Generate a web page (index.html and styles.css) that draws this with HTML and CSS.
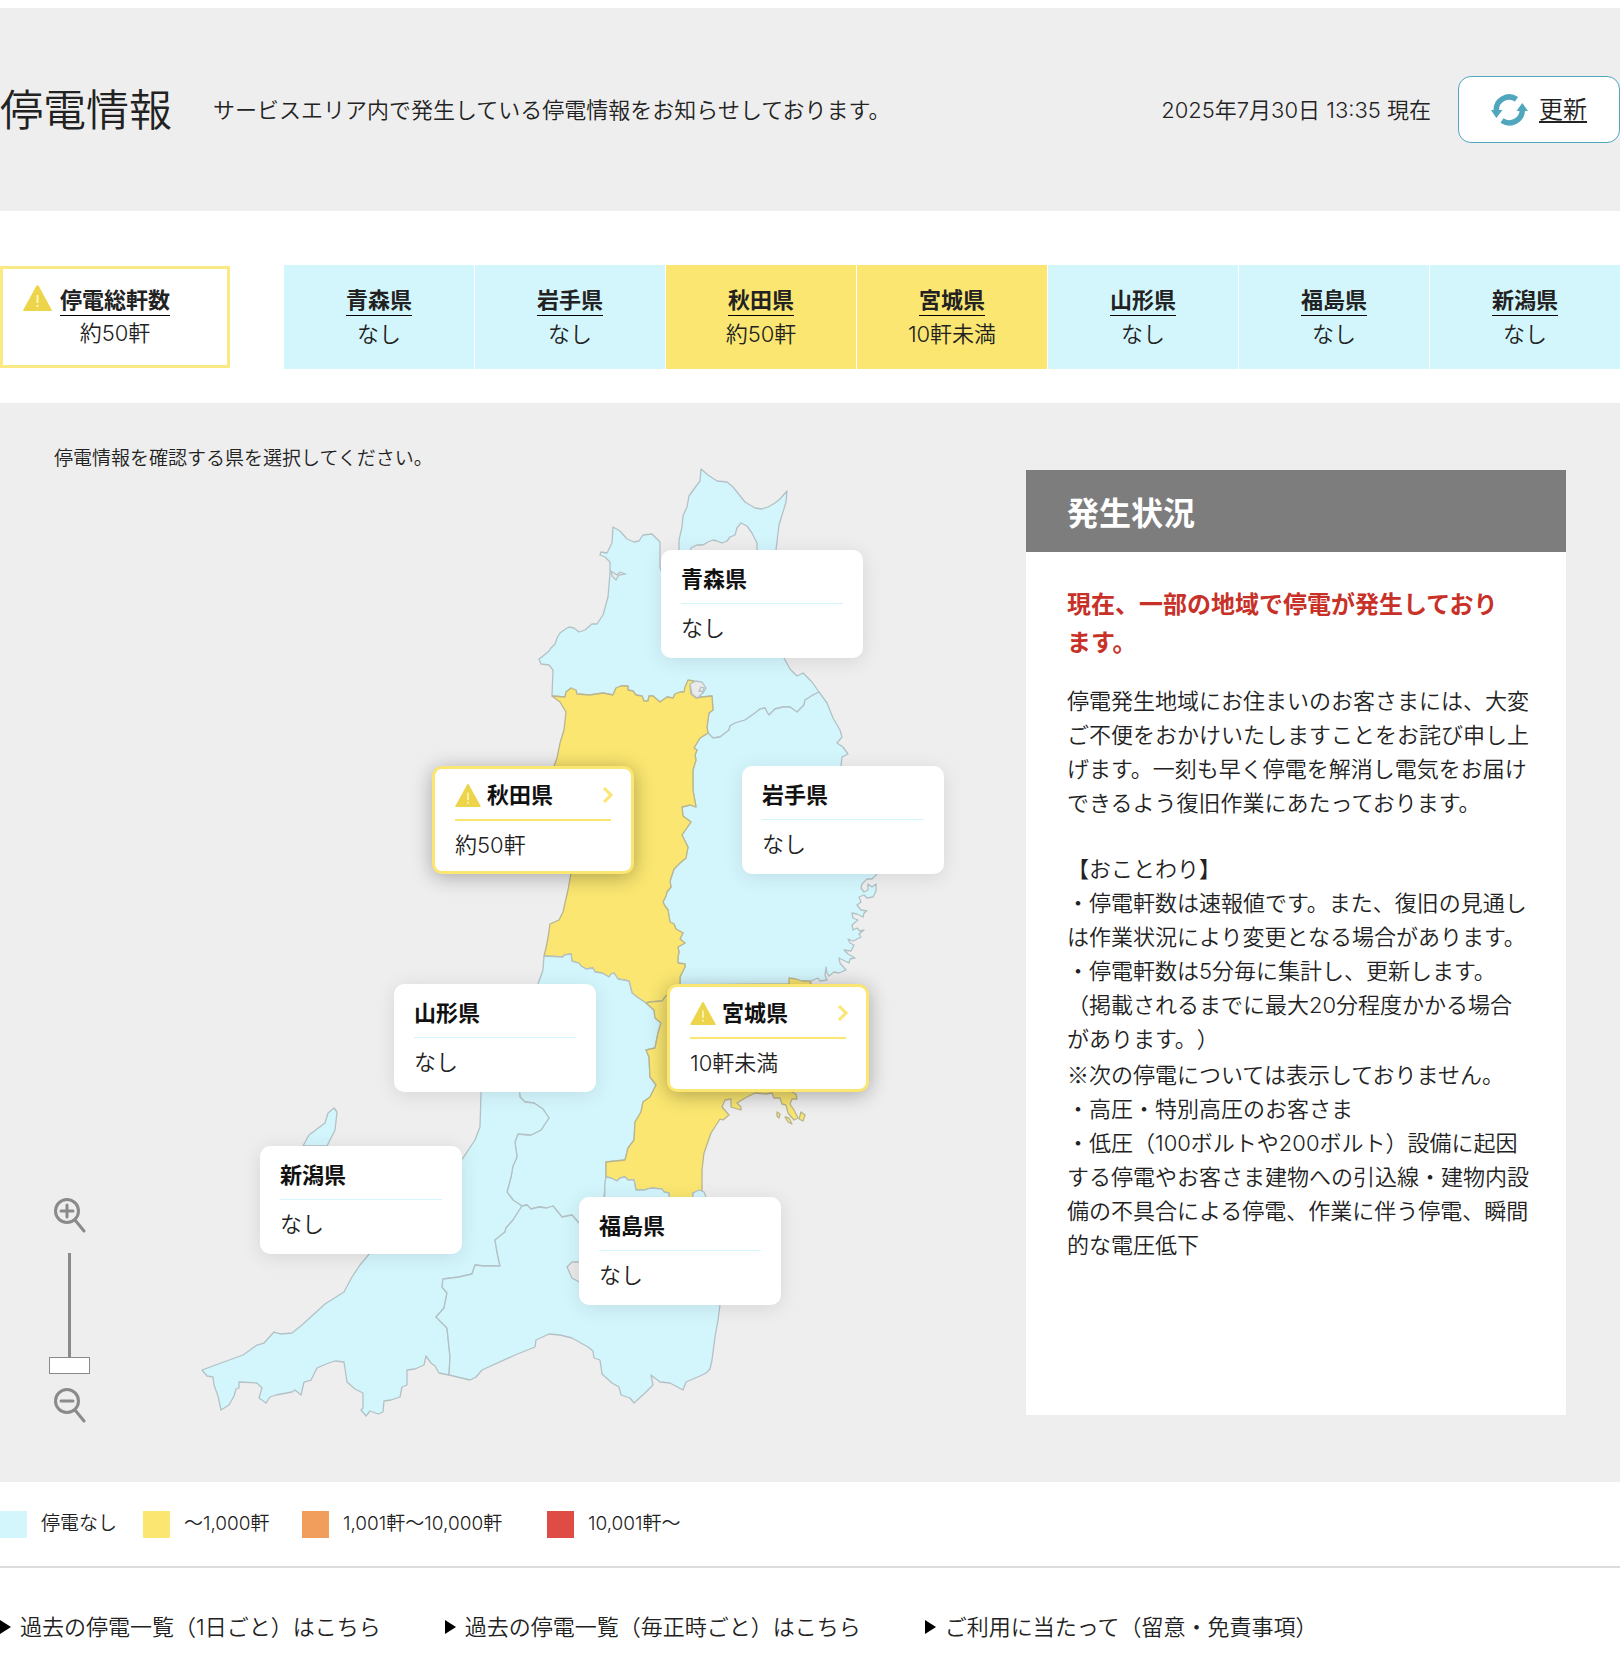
FILE: index.html
```html
<!DOCTYPE html>
<html lang="ja">
<head>
<meta charset="utf-8">
<meta name="viewport" content="width=device-width, initial-scale=1">
<title>停電情報</title>
<link rel="stylesheet" href="styles.css">
</head>
<body>
<svg class="defs" aria-hidden="true">
  <symbol id="warn" viewBox="0 0 29 26">
    <path fill="#ecd54b" d="M13.4.8a1.3 1.3 0 0 1 2.2 0L28.8 25a.7.7 0 0 1-.6 1H.8a.7.7 0 0 1-.6-1z"/>
    <path stroke="#fff7c4" stroke-width="1.8" d="M14.5 10v8M14.5 20v2"/>
  </symbol>
  <symbol id="chev" viewBox="0 0 12 18">
    <path fill="none" stroke="#fae670" stroke-width="3" d="M2 2l7 7-7 7"/>
  </symbol>
</svg>

<header class="hero">
  <h1 class="hero-title">停電情報</h1>
  <p class="hero-lead">サービスエリア内で発生している停電情報をお知らせしております。</p>
  <p class="hero-time">2025年7月30日 13:35 現在</p>
  <button class="refresh" type="button">
    <svg width="37" height="32" viewBox="0 0 37 32" aria-hidden="true">
      <g fill="none" stroke="#50a6bd" stroke-width="5.5">
        <path d="M25.5 5.2A13 13 0 0 0 5.3 16.5"/>
        <path d="M11 26.6A13 13 0 0 0 31.3 15.5"/>
      </g>
      <path fill="#50a6bd" d="M0 16h11.5L5.3 24zM25.5 17H37L31.3 9z"/>
    </svg>
    <span>更新</span>
  </button>
</header>

<main>
  <nav class="summary" aria-label="県別の停電軒数">
    <a class="total" href="#all">
      <span class="total-head">
        <svg class="total-icon" width="29" height="26" aria-hidden="true"><use href="#warn"/></svg>
        <span class="tab-name">停電総軒数</span>
      </span>
      <span class="tab-value">約50軒</span>
    </a>
    <div class="tabs">
      <a class="tab" href="#aomori"><span class="tab-name">青森県</span><span class="tab-value">なし</span></a>
      <a class="tab" href="#iwate"><span class="tab-name">岩手県</span><span class="tab-value">なし</span></a>
      <a class="tab is-out" href="#akita"><span class="tab-name">秋田県</span><span class="tab-value">約50軒</span></a>
      <a class="tab is-out" href="#miyagi"><span class="tab-name">宮城県</span><span class="tab-value">10軒未満</span></a>
      <a class="tab" href="#yamagata"><span class="tab-name">山形県</span><span class="tab-value">なし</span></a>
      <a class="tab" href="#fukushima"><span class="tab-name">福島県</span><span class="tab-value">なし</span></a>
      <a class="tab" href="#niigata"><span class="tab-name">新潟県</span><span class="tab-value">なし</span></a>
    </div>
  </nav>

  <section class="area">
    <div class="area-map">
      <p class="prompt">停電情報を確認する県を選択してください。</p>
      <div class="stage">
        <svg class="map" width="900" height="941" viewBox="54 474 900 941" aria-hidden="true">
          <g class="land">
            <path d="M552 696L553 670 549 665 541 664 539 659 543 656 549 651 551 648 555 644 557 638 560 633 564 630 569 627 574 628 579 632 585 630 592 624 597 624 603 615 608 597 610 573 610 562 605 557 600 555 601 552 607 553 612 543 613 527 620 531 627 539 634 542 639 541 643 535 652 534 657 539 660 542 660 567 668 592 720 600 750 590 757 550 757 543 752 533 747 526 741 523 737 528 735 535 730 537 727 541 722 543 717 541 713 540 708 542 703 545 697 545 691 548 690 556 679 556 679 540 682 527 683 516 687 507 689 496 694 489 700 481 701 469 708 475 717 481 727 482 733 487 745 502 755 508 762 509 768 507 775 503 780 499 787 491 786 502 779 525 776 550 784 658 790 669 797 676 803 673 812 682 819 692 813 695 805 700 804 705 797 712 790 707 783 707 775 709 769 715 767 712 765 708 760 709 755 713 745 720 735 723 730 726 729 730 720 737 713 738 708 733 707 727 709 713 713 710 712 696 702 697 690 690 684 692 680 692 675 694 673 698 667 697 660 702 653 696 649 696 648 701 644 701 642 696 636 695 633 691 628 690 628 686 621 686 616 688 613 695 603 693 590 695 577 694 571 688 566 692 565 697z"/>
            <path d="M819 692L827 703 833 718 840 730 842 737 837 743 843 747 848 754 842 757 841 766 880 800 877 874 872 879 867 879 862 884 861 888 864 892 868 890 868 884 872 887 876 884 876 891 873 897 867 898 864 895 859 897 861 902 857 905 861 910 867 911 864 913 863 917 857 914 852 913 853 918 858 920 852 925 853 930 857 928 860 931 864 930 859 934 861 937 853 941 848 939 850 943 854 945 851 951 844 950 848 954 855 958 850 959 849 963 839 958 840 963 846 970 839 973 834 972 829 976 827 973 826 967 825 975 827 980 820 981 818 978 811 981 811 990 680 990 680 977 682 973 685 967 685 964 678 963 678 957 679 952 678 947 685 943 680 939 683 933 676 929 674 924 670 922 668 910 665 906 663 902 666 896 667 892 671 887 670 881 674 869 680 863 686 858 688 847 682 835 691 822 683 816 682 807 690 805 696 807 693 790 693 770 696 760 695 755 697 750 694 748 700 738 708 733 713 738 720 737 729 730 730 726 735 723 745 720 755 713 760 709 765 708 767 712 769 715 775 709 783 707 790 707 797 712 804 705 805 700 813 695z"/>
            <path class="out" d="M552 696L560 702 566 712 564 730 560 743 557 758 554 766 571 873 568 890 563 912 559 920 550 924 548 938 546 948 544 956 563 957 564 955 571 954 572 961 579 963 581 966 586 969 593 968 595 972 602 973 609 977 611 974 614 973 616 976 618 979 629 981 632 993 637 997 646 1003 650 1002 662 1001 666 996 680 985 680 977 682 973 685 967 685 964 678 963 678 957 679 952 678 947 685 943 680 939 683 933 676 929 674 924 670 922 668 910 665 906 663 902 666 896 667 892 671 887 670 881 674 869 680 863 686 858 688 847 682 835 691 822 683 816 682 807 690 805 696 807 693 790 693 770 696 760 695 755 697 750 694 748 700 738 708 733 707 727 709 713 713 710 712 696 702 697 696 698 691 694 690 686 694 681 688 680 685 687 684 692 680 692 675 694 673 698 667 697 660 702 653 696 649 696 648 701 644 701 642 696 636 695 633 691 628 690 628 686 621 686 616 688 613 695 603 693 590 695 577 694 576 690 571 688 566 692 565 697z"/>
            <path d="M544 956L563 957 564 955 571 954 572 961 579 963 581 966 586 969 593 968 595 972 602 973 609 977 611 974 614 973 618 979 629 981 632 993 637 997 646 1003 654 1010 655 1018 661 1023 658 1033 655 1048 646 1050 649 1057 650 1077 656 1085 650 1097 643 1102 641 1112 635 1122 634 1140 628 1148 625 1160 606 1162 606 1177 604 1197 604 1223 579 1223 572 1215 562 1217 553 1206 547 1208 539 1207 531 1209 527 1205 522 1206 513 1200 507 1192 511 1177 513 1166 517 1157 515 1142 518 1134 531 1135 541 1130 549 1118 543 1109 534 1103 525 1102 520 1097 519 1092 520 1020 538 984 543 970z"/>
            <path class="out" d="M646 1003L654 1010 655 1018 661 1023 658 1033 655 1048 646 1050 649 1057 650 1077 656 1085 650 1097 643 1102 641 1112 635 1122 634 1140 628 1148 625 1160 606 1162 606 1177 611 1178 617 1181 620 1178 625 1177 628 1180 634 1180 636 1190 644 1190 651 1188 662 1189 664 1192 669 1193 669 1205 693 1205 693 1193 702 1191 702 1170 704 1153 711 1133 720 1119 723 1120 729 1115 722 1107 725 1100 731 1099 731 1107 741 1110 741 1107 737 1103 745 1098 755 1093 766 1094 772 1093 774 1098 780 1098 782 1104 786 1105 788 1113 794 1120 798 1118 794 1110 790 1104 792 1099 797 1099 796 1094 788 1090 800 1060 811 990 810 981 802 981 796 979 789 978 789 984 680 985 666 996 662 1001 650 1002z"/>
            <path class="out" d="M801 1112l4 3-2 6-4-2zM785 1117l4 1 3 6-4-2zM777 1112l3 2-1 4-2-2z"/>
            <path d="M481 1093L480 1127 475 1140 463 1158 420 1200 370 1253 360 1265 352 1277 344 1292 325 1304 302 1325 292 1333 281 1334 274 1332 264 1343 257 1345 243 1355 221 1363 202 1370 207 1376 213 1377 214 1385 218 1396 221 1410 229 1405 234 1396 236 1389 239 1388 239 1382 257 1383 262 1388 259 1398 266 1403 270 1397 276 1395 292 1392 295 1390 301 1395 304 1382 311 1380 317 1368 326 1364 335 1361 344 1362 347 1382 355 1389 363 1393 363 1408 361 1410 366 1416 370 1411 378 1414 383 1412 384 1401 391 1400 400 1397 402 1387 407 1385 407 1370 415 1369 424 1365 426 1356 431 1363 435 1366 439 1373 449 1375 450 1357 447 1328 436 1317 444 1308 447 1293 442 1287 443 1279 459 1277 472 1274 475 1265 484 1266 500 1266 497 1252 495 1240 505 1232 506 1228 513 1220 522 1206 513 1200 507 1192 511 1177 513 1166 517 1157 515 1142 518 1134 531 1135 541 1130 549 1118 543 1109 534 1103 525 1102 520 1097 519 1080 483 1080z"/>
            <path d="M303 1146L309 1135 325 1123 328 1113 334 1108 337 1112 335 1130 327 1146z"/>
            <path d="M522 1206L527 1205 531 1209 539 1207 547 1208 553 1206 562 1217 572 1215 579 1223 604 1223 605 1182 606 1177 611 1178 617 1181 620 1178 625 1177 628 1180 634 1180 636 1190 644 1190 651 1188 662 1189 664 1192 669 1193 669 1205 693 1205 693 1193 699 1190 704 1192 706 1197 724 1240 720 1305 718 1320 715 1337 712 1360 710 1369 706 1373 700 1376 686 1382 683 1390 670 1383 660 1382 651 1375 653 1385 645 1393 634 1403 630 1398 621 1395 619 1387 612 1383 602 1374 600 1360 594 1358 593 1351 588 1347 572 1338 560 1335 549 1334 536 1340 535 1347 515 1355 482 1370 476 1377 470 1380 449 1375 450 1357 447 1328 436 1317 444 1308 447 1293 442 1287 443 1279 459 1277 472 1274 475 1265 484 1266 500 1266 497 1252 495 1240 505 1232 506 1228 513 1220z"/>
          </g>
          <g class="water">
            <path d="M690 684L696 681 702 682 706 688 703 693 697 698 692 694z"/>
            <path d="M701 687l3 1-1 4-4-1z"/>
            <path d="M611 571L617 575 620 572 625 574 619 575 616 580 612 576z"/>
            <path d="M585 1262L572 1262 567 1267 572 1278 585 1285z"/>
          </g>
        </svg>

        <a class="card aomori" href="#aomori"><span class="card-name">青森県</span><span class="card-value">なし</span></a>
        <a class="card iwate" href="#iwate"><span class="card-name">岩手県</span><span class="card-value">なし</span></a>
        <a class="card yamagata" href="#yamagata"><span class="card-name">山形県</span><span class="card-value">なし</span></a>
        <a class="card niigata" href="#niigata"><span class="card-name">新潟県</span><span class="card-value">なし</span></a>
        <a class="card fukushima" href="#fukushima"><span class="card-name">福島県</span><span class="card-value">なし</span></a>
        <a class="card is-alert akita" href="#akita">
          <span class="card-name"><svg width="26" height="23" aria-hidden="true"><use href="#warn"/></svg>秋田県<svg class="card-go" width="12" height="18" aria-hidden="true"><use href="#chev"/></svg></span>
          <span class="card-value">約50軒</span>
        </a>
        <a class="card is-alert miyagi" href="#miyagi">
          <span class="card-name"><svg width="26" height="23" aria-hidden="true"><use href="#warn"/></svg>宮城県<svg class="card-go" width="12" height="18" aria-hidden="true"><use href="#chev"/></svg></span>
          <span class="card-value">10軒未満</span>
        </a>

        <div class="zoom">
          <button class="zoom-btn" type="button" aria-label="拡大">
            <svg width="32" height="36" viewBox="0 0 32 36"><g fill="none" stroke="#8a8a8a" stroke-width="3" stroke-linecap="round"><circle cx="13" cy="13" r="11.5"/><path d="M21 22l9 11M7 13h12M13 7v12"/></g></svg>
          </button>
          <input class="zoom-range" type="range" min="0" max="10" value="0" aria-label="地図の縮尺">
          <button class="zoom-btn" type="button" aria-label="縮小">
            <svg width="32" height="36" viewBox="0 0 32 36"><g fill="none" stroke="#8a8a8a" stroke-width="3" stroke-linecap="round"><circle cx="13" cy="13" r="11.5"/><path d="M21 22l9 11M7 13h12"/></g></svg>
          </button>
        </div>
      </div>
    </div>

    <aside class="status">
      <h2 class="status-title">発生状況</h2>
      <div class="status-body">
        <p class="status-alert">現在、一部の地域で停電が発生しており<br>ます。</p>
        <p>停電発生地域にお住まいのお客さまには、大変ご不便をおかけいたしますことをお詫び申し上げます。一刻も早く停電を解消し電気をお届けできるよう復旧作業にあたっております。</p>
        <p class="status-note">【おことわり】<br>・停電軒数は速報値です。また、復旧の見通しは作業状況により変更となる場合があります。<br>・停電軒数は5分毎に集計し、更新します。<br>（掲載されるまでに最大20分程度かかる場合があります。）<br><span class="mark">※</span>次の停電については表示しておりません。<br>・高圧・特別高圧のお客さま<br>・低圧（100ボルトや200ボルト）設備に起因する停電やお客さま建物への引込線・建物内設備の不具合による停電、作業に伴う停電、瞬間的な電圧低下</p>
      </div>
    </aside>
  </section>

  <ul class="legend">
    <li><span class="swatch none"></span>停電なし</li>
    <li><span class="swatch low"></span>～1,000軒</li>
    <li><span class="swatch mid"></span>1,001軒～10,000軒</li>
    <li><span class="swatch high"></span>10,001軒～</li>
  </ul>
</main>

<footer class="links">
  <a href="#daily">過去の停電一覧（1日ごと）はこちら</a>
  <a href="#hourly">過去の停電一覧（毎正時ごと）はこちら</a>
  <a href="#terms">ご利用に当たって（留意・免責事項）</a>
</footer>
</body>
</html>
```
FILE: styles.css
```css
* { box-sizing: border-box; }

body {
  margin: 0;
  padding-top: 8px;
  background: #fff;
  color: #222;
  font-family: Inter, "Noto Sans CJK JP", sans-serif;
  font-size: 22px;
  font-weight: 350;
  line-height: 34px;
  text-spacing-trim: space-all;
}

h1, h2, p, ul { margin: 0; padding: 0; font-weight: inherit; }
a { color: inherit; text-decoration: none; }
button { font: inherit; color: inherit; cursor: pointer; }
svg { display: block; flex: none; }
.defs { position: absolute; width: 0; height: 0; }

/* header */
.hero {
  display: flex;
  align-items: center;
  min-height: 203px;
  background: #eee;
}
.hero-title { font-size: 43px; line-height: 60px; margin-right: 41px; }
.hero-time { margin-left: auto; margin-right: 27px; }
.refresh {
  display: flex;
  align-items: center;
  gap: 11px;
  height: 67px;
  padding: 0 32px;
  border: 1px solid #50a6bd;
  border-radius: 13px;
  background: #fff;
  font-size: 24px;
  text-decoration: underline;
  text-underline-offset: 3px;
}

/* prefecture summary */
.summary {
  display: flex;
  align-items: center;
  gap: 54px;
  padding: 54px 0 34px;
  text-align: center;
}
.total {
  width: 230px;
  height: 102px;
  padding-top: 16px;
  border: 3px solid #fbe983;
}
.total-head {
  display: grid;
  grid-template-columns: 1fr auto 1fr;
  align-items: start;
}
.total-icon { justify-self: end; margin-right: 8px; }
.tabs { display: flex; flex: 1; gap: 1px; }
.tab {
  flex: 1;
  min-height: 104px;
  padding-top: 18px;
  background: #d3f6fc;
}
.tab.is-out { background: #fae670; }
.tab-name {
  display: inline-block;
  border-bottom: 1px solid #000;
  font-weight: 700;
  line-height: 30px;
}
.tab-value { display: block; }

/* map area */
.area {
  display: grid;
  grid-template-columns: 1fr 540px;
  padding: 37px 54px 67px;
  background: #eee;
}
.prompt { margin: 2px 0 -2px; font-size: 19px; }
.stage { position: relative; height: 941px; }
.map { overflow: visible; }
.land path { fill: #d3f6fc; stroke: #b3c1c5; stroke-width: 1.3; stroke-linejoin: round; }
.land .out { fill: #fae670; stroke: #b9b58e; }
.water path { fill: #eaeaea; stroke: #b3c1c5; stroke-width: 1.3; }

.card {
  position: absolute;
  width: 202px;
  height: 108px;
  padding: 5px 20px 0;
  border-radius: 10px;
  background: #fff;
  box-shadow: 0 3px 20px rgba(0, 0, 0, .1);
}
.card-name {
  display: flex;
  align-items: center;
  height: 49px;
  border-bottom: 1px solid #d3f6fc;
  color: #111;
  font-weight: 700;
}
.card-value { display: block; padding-top: 7px; }
.card.is-alert {
  padding-top: 2px;
  border: 3px solid #fae670;
  box-shadow: 0 3px 20px rgba(0, 0, 0, .3);
}
.is-alert .card-name { gap: 6px; height: 50px; border-bottom: 2px solid #fae670; }
.card-go { margin-left: auto; margin-right: -3px; }
.aomori { left: 607px; top: 76px; }
.akita { left: 378px; top: 292px; }
.iwate { left: 688px; top: 292px; }
.yamagata { left: 340px; top: 510px; }
.miyagi { left: 613px; top: 510px; }
.niigata { left: 206px; top: 672px; }
.fukushima { left: 525px; top: 723px; }

.zoom {
  position: absolute;
  left: -5px;
  top: 724px;
  display: flex;
  flex-direction: column;
  align-items: center;
}
.zoom-btn { padding: 0; border: 0; background: none; }
.zoom-range {
  appearance: none;
  width: 41px;
  height: 121px;
  margin: 19px 0 14px;
  writing-mode: vertical-lr;
  direction: rtl;
  background: linear-gradient(#8a8a8a, #8a8a8a) center / 3px 100% no-repeat;
}
.zoom-range::-webkit-slider-thumb {
  appearance: none;
  width: 41px;
  height: 17px;
  border: 1px solid #8a8a8a;
  background: #fff;
}

/* status panel */
.status { margin-top: 30px; background: #fff; }
.status-title {
  padding: 22px 41px 16px;
  background: #7d7d7d;
  color: #fff;
  font-size: 32px;
  font-weight: 700;
  line-height: 44px;
}
.status-body { padding: 34px 36px 34px 41px; }
.status-alert {
  margin-bottom: 22px;
  color: #c73128;
  font-size: 24px;
  font-weight: 700;
  line-height: 38px;
}
.status-note { margin-top: 32px; }
.mark { font-family: "Noto Sans CJK JP", sans-serif; }

/* legend */
.legend {
  display: grid;
  grid-template-columns: 143px 159px 245px auto;
  padding: 25px 0;
  border-bottom: 2px solid #ddd;
  list-style: none;
  font-size: 19px;
}
.legend li { display: flex; align-items: center; gap: 14px; white-space: nowrap; }
.swatch { width: 27px; height: 27px; }
.swatch.none { background: #d3f6fc; }
.swatch.low { background: #fae670; }
.swatch.mid { background: #f19d5c; }
.swatch.high { background: #de4c45; }

/* footer links */
.links { display: flex; flex-wrap: wrap; gap: 12px 64px; padding: 42px 0 24px; }
.links a { display: flex; align-items: center; gap: 9px; }
.links a::before {
  content: "";
  border-left: 11px solid #000;
  border-top: 7px solid transparent;
  border-bottom: 7px solid transparent;
}
```
